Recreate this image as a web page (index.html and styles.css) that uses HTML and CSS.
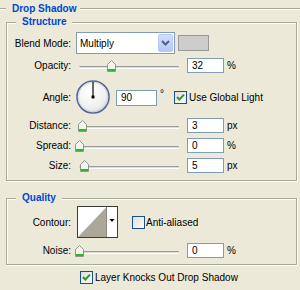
FILE: index.html
```html
<!DOCTYPE html>
<html>
<head>
<meta charset="utf-8">
<link rel="stylesheet" href="styles.css">
</head>
<body>
<div class="panel">
  <div class="panel-head">
    <span class="rule rule-start"></span>
    <span class="panel-title">Drop Shadow</span>
    <span class="rule rule-fill"></span>
  </div>

  <div class="group group-structure">
    <div class="group-title">Structure</div>

    <div class="row row-blend">
      <span class="lbl">Blend Mode:</span>
      <div class="select">
        <span class="select-value">Multiply</span>
        <span class="select-btn">
          <svg width="9" height="6" viewBox="0 0 9 6"><path d="M1 1 L4.5 4.5 L8 1" fill="none" stroke="#4d6185" stroke-width="2"/></svg>
        </span>
      </div>
      <span class="swatch"></span>
    </div>

    <div class="row row-slider row-opacity">
      <span class="lbl">Opacity:</span>
      <div class="slider">
        <span class="track"></span>
        <span class="thumb" style="left:32px"><svg width="9" height="12" viewBox="0 0 9 12"><path d="M4.5 0.5 L8.5 4.5 V11.5 H0.5 V4.5 Z" fill="#f4f4ee" stroke="#8a9a8a"/><rect x="1" y="9" width="7" height="2" fill="#2eb52e"/></svg></span>
      </div>
      <span class="field">32</span><span class="unit">%</span>
    </div>

    <div class="row row-angle">
      <span class="lbl">Angle:</span>
      <svg class="dial" width="36" height="36" viewBox="0 0 36 36">
        <defs>
          <radialGradient id="dialfill" cx="0.4" cy="0.35" r="0.7">
            <stop offset="0" stop-color="#ffffff"/>
            <stop offset="0.7" stop-color="#f0f0ee"/>
            <stop offset="1" stop-color="#d6d6d2"/>
          </radialGradient>
        </defs>
        <circle cx="17.5" cy="17.5" r="16.5" fill="url(#dialfill)" stroke="#55659a" stroke-width="1.6"/>
        <circle cx="17.5" cy="17.5" r="15.2" fill="none" stroke="#c8cbdc" stroke-width="0.8"/>
        <line x1="17.5" y1="17.5" x2="17.5" y2="1.8" stroke="#000" stroke-width="1.2"/>
        <rect x="16" y="16" width="3" height="3" fill="#000"/>
      </svg>
      <span class="field field-angle">90</span><span class="deg">°</span>
      <span class="check"><svg width="13" height="13" viewBox="0 0 13 13"><defs><linearGradient id="cb1" x1="0" y1="0" x2="1" y2="1"><stop offset="0" stop-color="#dcdcd7"/><stop offset="1" stop-color="#ffffff"/></linearGradient></defs><rect x="0.5" y="0.5" width="12" height="12" fill="url(#cb1)" stroke="#1c5180"/><polyline points="3,6 5.3,8.5 10,3.6" fill="none" stroke="#21a121" stroke-width="2"/></svg></span>
      <span class="check-lbl">Use Global Light</span>
    </div>

    <div class="row row-slider row-distance">
      <span class="lbl">Distance:</span>
      <div class="slider">
        <span class="track"></span>
        <span class="thumb" style="left:3px"><svg width="9" height="12" viewBox="0 0 9 12"><path d="M4.5 0.5 L8.5 4.5 V11.5 H0.5 V4.5 Z" fill="#f4f4ee" stroke="#8a9a8a"/><rect x="1" y="9" width="7" height="2" fill="#2eb52e"/></svg></span>
      </div>
      <span class="field">3</span><span class="unit">px</span>
    </div>

    <div class="row row-slider row-spread">
      <span class="lbl">Spread:</span>
      <div class="slider">
        <span class="track"></span>
        <span class="thumb" style="left:0px"><svg width="9" height="12" viewBox="0 0 9 12"><path d="M4.5 0.5 L8.5 4.5 V11.5 H0.5 V4.5 Z" fill="#f4f4ee" stroke="#8a9a8a"/><rect x="1" y="9" width="7" height="2" fill="#2eb52e"/></svg></span>
      </div>
      <span class="field">0</span><span class="unit">%</span>
    </div>

    <div class="row row-slider row-size">
      <span class="lbl">Size:</span>
      <div class="slider">
        <span class="track"></span>
        <span class="thumb" style="left:5px"><svg width="9" height="12" viewBox="0 0 9 12"><path d="M4.5 0.5 L8.5 4.5 V11.5 H0.5 V4.5 Z" fill="#f4f4ee" stroke="#8a9a8a"/><rect x="1" y="9" width="7" height="2" fill="#2eb52e"/></svg></span>
      </div>
      <span class="field">5</span><span class="unit">px</span>
    </div>
  </div>

  <div class="group group-quality">
    <div class="group-title">Quality</div>

    <div class="row row-contour">
      <span class="lbl">Contour:</span>
      <svg class="contour" width="41" height="32" viewBox="0 0 41 32">
        <rect x="0.5" y="0.5" width="40" height="31" fill="#fff" stroke="#3a3a3a"/>
        <polygon points="1,31 29.5,1 29.5,31" fill="#aca899"/>
        <line x1="29.5" y1="1" x2="29.5" y2="31" stroke="#8c897e" stroke-width="1"/>
        <polygon points="32.5,13 37.5,13 35,16" fill="#000"/>
      </svg>
      <span class="check check-aa"><svg width="13" height="13" viewBox="0 0 13 13"><defs><linearGradient id="cb2" x1="0" y1="0" x2="1" y2="1"><stop offset="0" stop-color="#dcdcd7"/><stop offset="1" stop-color="#ffffff"/></linearGradient></defs><rect x="0.5" y="0.5" width="12" height="12" fill="url(#cb2)" stroke="#1c5180"/></svg></span>
      <span class="check-lbl check-lbl-aa">Anti-aliased</span>
    </div>

    <div class="row row-slider row-noise">
      <span class="lbl">Noise:</span>
      <div class="slider">
        <span class="track"></span>
        <span class="thumb" style="left:0px"><svg width="9" height="12" viewBox="0 0 9 12"><path d="M4.5 0.5 L8.5 4.5 V11.5 H0.5 V4.5 Z" fill="#f4f4ee" stroke="#8a9a8a"/><rect x="1" y="9" width="7" height="2" fill="#2eb52e"/></svg></span>
      </div>
      <span class="field">0</span><span class="unit">%</span>
    </div>
  </div>

  <div class="row row-knock">
    <span class="check"><svg width="13" height="13" viewBox="0 0 13 13"><defs><linearGradient id="cb3" x1="0" y1="0" x2="1" y2="1"><stop offset="0" stop-color="#dcdcd7"/><stop offset="1" stop-color="#ffffff"/></linearGradient></defs><rect x="0.5" y="0.5" width="12" height="12" fill="url(#cb3)" stroke="#1c5180"/><polyline points="3,6 5.3,8.5 10,3.6" fill="none" stroke="#21a121" stroke-width="2"/></svg></span>
    <span class="check-lbl">Layer Knocks Out Drop Shadow</span>
  </div>
</div>
</body>
</html>
```

FILE: styles.css
```css
* {
  box-sizing: border-box;
}

html,
body {
  margin: 0;
  padding: 0;
}

body {
  width: 300px;
  height: 290px;
  overflow: hidden;
  background: #ece9d8;
  font-family: "Liberation Sans", Arial, sans-serif;
  font-size: 10px;
  color: #000;
}

svg {
  display: block;
}

/* ---------- outer header ---------- */
.panel-head {
  display: flex;
  align-items: center;
  height: 18px;
}

.rule {
  height: 2px;
  border-top: 1px solid #aca899;
  border-bottom: 1px solid #ffffff;
}

.rule-start {
  width: 6px;
}

.rule-fill {
  flex: 1;
}

.panel-title {
  padding: 0 4px 0 6px;
  line-height: 12px;
  font-weight: bold;
  color: #0046d5;
}

/* ---------- group boxes ---------- */
.group {
  margin: 4px 3px 0 6px;
  border: 1px solid #aca899;
  box-shadow: inset 1px 1px 0 #ffffff, 1px 1px 0 #ffffff;
}

.group-structure {
  padding-bottom: 7px;
}

.group-quality {
  margin-top: 17px;
  padding-bottom: 6px;
}

.group-title {
  width: max-content;
  margin: -7px 0 0 9px;
  padding: 0 6px;
  line-height: 12px;
  background: #ece9d8;
  font-weight: bold;
  color: #0046d5;
}

/* ---------- rows ---------- */
.row {
  display: flex;
  align-items: center;
}

.lbl {
  flex: none;
  width: 64px;
  margin-right: 4px;
  text-align: right;
  white-space: nowrap;
}

.row-blend {
  height: 30px;
}

.row-slider {
  height: 15px;
}

.row-angle {
  height: 35px;
  margin-top: 7px;
}

.row-distance {
  margin-top: 3px;
}

.row-spread,
.row-size {
  margin-top: 5px;
}

.row-contour {
  height: 32px;
  margin-top: 2px;
}

.row-noise {
  margin-top: 5px;
}

.row-knock {
  height: 13px;
  margin-top: 6px;
  padding-left: 80px;
}

/* ---------- select ---------- */
.select {
  flex: none;
  display: flex;
  align-items: center;
  width: 99px;
  height: 22px;
  margin-left: 1px;
  padding: 1px;
  border: 1px solid #7f9db9;
  background: #ffffff;
}

.select-value {
  flex: 1;
  padding-left: 2px;
}

.select-btn {
  display: flex;
  align-items: center;
  justify-content: center;
  width: 15px;
  height: 18px;
  border: 1px solid #b7cbf6;
  border-radius: 2px;
  background: linear-gradient(#d2defd, #b3c7f7);
}

.swatch {
  flex: none;
  width: 31px;
  height: 16px;
  margin-left: 3px;
  border: 1px solid #9a9a9a;
  background: #cccccc;
}

/* ---------- sliders ---------- */
.slider {
  position: relative;
  flex: none;
  width: 108px;
  height: 15px;
}

.track {
  display: block;
  width: 100px;
  height: 3px;
  margin: 8px 0 0 4px;
  border-radius: 2px 1px 1px 2px;
  background: linear-gradient(#9c9c96 0 1px, #dddcd2 1px 2px, #ffffff 2px);
}

.thumb {
  position: absolute;
  top: 2px;
}

.field {
  flex: none;
  width: 37px;
  height: 15px;
  margin-left: 4px;
  padding-left: 4px;
  border: 1px solid #7f9db9;
  background: #ffffff;
  line-height: 13px;
}

.unit {
  margin-left: 3px;
}

/* ---------- angle ---------- */
.dial {
  flex: none;
  width: 35px;
  height: 35px;
  margin-left: 1px;
}

.field-angle {
  width: 41px;
  height: 16px;
  margin-left: 5px;
  line-height: 14px;
}

.deg {
  flex: none;
  width: 14px;
  margin-left: 3px;
  align-self: flex-start;
  margin-top: 8px;
}

.check {
  flex: none;
  width: 13px;
  height: 13px;
}

.check-lbl {
  margin-left: 2px;
  white-space: nowrap;
}

/* ---------- contour ---------- */
.contour {
  flex: none;
  margin-left: 2px;
}

.check-aa {
  margin-left: 14px;
}

.check-lbl-aa {
  margin-left: 1px;
}
```
